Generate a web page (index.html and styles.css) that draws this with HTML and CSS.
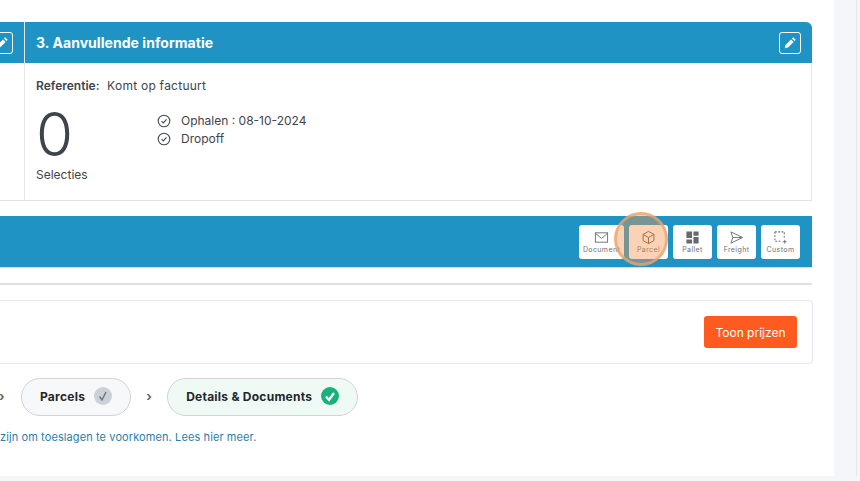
FILE: index.html
```html
<!DOCTYPE html>
<html lang="nl">
<head>
  <meta charset="UTF-8" />
  <title>Verzending</title>
  <link rel="stylesheet" href="styles.css">
</head>
<body>
  <div class="page">
    <main class="main">
      <section class="summary">
        <div class="col-prev">
          <div class="col-prev-head">
            <span class="edit-btn">
              <svg viewBox="0 0 16 16" width="13" height="13"><path d="M11.3 1.6l3.1 3.1-1.5 1.5-3.1-3.1zM8.7 4.2l3.1 3.1-6.9 6.9-3.9.8.8-3.9z" fill="#fff"/></svg>
            </span>
          </div>
        </div>
        <div class="col-info">
          <div class="col-head">
            <h2>3. Aanvullende informatie</h2>
            <span class="edit-btn">
              <svg viewBox="0 0 16 16" width="13" height="13"><path d="M11.3 1.6l3.1 3.1-1.5 1.5-3.1-3.1zM8.7 4.2l3.1 3.1-6.9 6.9-3.9.8.8-3.9z" fill="#fff"/></svg>
            </span>
          </div>
          <div class="col-body">
            <div class="ref"><b>Referentie:</b> Komt op factuurt</div>
            <div class="stats">
              <div class="count">
                <div class="count-num">0</div>
                <div class="count-label">Selecties</div>
              </div>
              <ul class="checks">
                <li>
                  <svg viewBox="0 0 16 16" width="14" height="14"><circle cx="8" cy="8" r="6.6" fill="none" stroke="#444b55" stroke-width="1.3"/><path d="M5.2 8.2l2 2 3.7-4" fill="none" stroke="#444b55" stroke-width="1.3"/></svg>
                  Ophalen : 08-10-2024
                </li>
                <li>
                  <svg viewBox="0 0 16 16" width="14" height="14"><circle cx="8" cy="8" r="6.6" fill="none" stroke="#444b55" stroke-width="1.3"/><path d="M5.2 8.2l2 2 3.7-4" fill="none" stroke="#444b55" stroke-width="1.3"/></svg>
                  Dropoff
                </li>
              </ul>
            </div>
          </div>
        </div>
      </section>

      <section class="type-bar">
        <div class="type-btn type-doc">
          <svg viewBox="0 0 16 16" width="15" height="15"><rect x="1.5" y="3" width="13" height="10" fill="none" stroke="#6b6f76" stroke-width="1"/><path d="M1.5 3.5L8 9l6.500-5.500" fill="none" stroke="#6b6f76" stroke-width="1"/></svg>
          <span>Document</span>
        </div>
        <div class="type-btn">
          <svg viewBox="0 0 16 16" width="15" height="15"><path d="M8 1.500l5.800 3.200v6.600L8 14.500l-5.800-3.200V4.700zM2.200 4.700L8 8l5.800-3.300M8 8v6.500" fill="none" stroke="#6b4a33" stroke-width="1"/></svg>
          <span>Parcel</span>
          <i class="click-ring"></i>
        </div>
        <div class="type-btn">
          <svg viewBox="0 0 16 16" width="15" height="15"><path d="M1.500 1.500h6v7h-6zM9 1.500h5.500v4.500H9zM1.500 10h6v4.500h-6zM9 7.500h5.500v7H9z" fill="#666a70"/></svg>
          <span>Pallet</span>
        </div>
        <div class="type-btn">
          <svg viewBox="0 0 16 16" width="15" height="15"><path d="M2 2l12.500 6L2 14l2-6zM4 8h10" fill="none" stroke="#6b6f76" stroke-width="1"/></svg>
          <span>Freight</span>
        </div>
        <div class="type-btn">
          <svg viewBox="0 0 16 16" width="15" height="15"><path d="M2 2h10v7M2 2v10h7" fill="none" stroke="#6b6f76" stroke-width="1.100" stroke-dasharray="2 1.500"/><path d="M12.500 10.500v4M10.500 12.500h4" fill="none" stroke="#6b6f76" stroke-width="1"/></svg>
          <span>Custom</span>
        </div>
      </section>

      <hr class="rule">

      <section class="price-card">
        <button class="price-btn" type="button">Toon prijzen</button>
      </section>

      <div class="steps">
        <span class="chev chev-first">›</span>
        <div class="step">
          Parcels
          <svg viewBox="0 0 18 18" width="18" height="18"><circle cx="9" cy="9" r="9" fill="#ccd0d9"/><path d="M5.500 9.500l2.500 3.500 4-8" fill="none" stroke="#6f7480" stroke-width="1.400"/></svg>
        </div>
        <span class="chev">›</span>
        <div class="step step-done">
          Details &amp; Documents
          <svg viewBox="0 0 18 18" width="18" height="18"><circle cx="9" cy="9" r="9" fill="#17b27a"/><path d="M5 9.500l3 3.500 5-7" fill="none" stroke="#fff" stroke-width="2.200"/></svg>
        </div>
      </div>

      <p class="note">zijn om toeslagen te voorkomen. Lees hier meer.</p>
    </main>
    <aside class="gutter"></aside>
  </div>
</body>
</html>
```

FILE: styles.css
```css
* {
  box-sizing: border-box;
}
html, body {
  margin: 0;
  padding: 0;
  overflow: hidden;
}
body {
  width: 860px;
  height: 481px;
  background: #f5f6f9;
  font-family: "Inter", "Open Sans", sans-serif;
  color: #3f444c;
}
.page {
  display: flex;
  height: 476px;
}
.main {
  width: 834px;
  padding: 22px 22px 0 0;
  background: #fff;
}
.gutter {
  flex: 1;
  background: #f5f6f9;
  border-right: 1px solid #e6e8ec;
  margin-right: 3px;
}

/* samenvatting */
.summary {
  display: flex;
  height: 179px;
  border-bottom: 1px solid #dfe3e8;
  border-right: 1px solid #e4e7eb;
  border-radius: 0 6px 0 0;
}
.col-prev {
  width: 25px;
  border-right: 1px solid #e4e7eb;
}
.col-prev-head {
  height: 41px;
  background: #1f94c4;
  display: flex;
  align-items: center;
  justify-content: flex-end;
  padding-right: 11px;
  overflow: hidden;
}
.col-info {
  flex: 1;
}
.col-head {
  height: 41px;
  background: #1f94c4;
  color: #fff;
  display: flex;
  align-items: center;
  justify-content: space-between;
  padding: 0 11px;
  border-radius: 0 6px 0 0;
  margin-right: -1px;
}
.col-head h2 {
  margin: 0 0 1px;
  font-size: 14px;
  font-weight: 700;
  letter-spacing: 0.05px;
}
.edit-btn {
  width: 22px;
  height: 22px;
  flex-shrink: 0;
  border: 1px solid #fff;
  border-radius: 3px;
  display: flex;
  align-items: center;
  justify-content: center;
}
.col-body {
  padding: 15px 11px 0;
}
.ref {
  font-size: 12px;
  line-height: 16px;
  letter-spacing: 0.25px;
}
.ref b {
  font-weight: 600;
  letter-spacing: 0;
  margin-right: 4px;
}
.stats {
  display: flex;
  margin-top: 8px;
}
.count {
  width: 121px;
}
.count-num {
  font-size: 60px;
  line-height: 56px;
  font-weight: 300;
  margin: 4px 0 5px;
}
.count-label {
  font-size: 12px;
  line-height: 16px;
}
.checks {
  list-style: none;
  margin: 10px 0 0;
  padding: 0;
  font-size: 12px;
  line-height: 18px;
}
.checks li {
  display: flex;
  align-items: center;
  gap: 10px;
}

/* type balk */
.type-bar {
  margin-top: 15px;
  height: 52px;
  background: #1f94c4;
  border-bottom: 1px solid #d9dde2;
  display: flex;
  justify-content: flex-end;
  align-items: center;
  gap: 5px;
  padding: 1px 12px 0 0;
}
.type-btn {
  position: relative;
  width: 39px;
  height: 34px;
  background: #fff;
  border-radius: 3px;
  display: flex;
  flex-direction: column;
  align-items: center;
  justify-content: center;
  gap: 1px;
  font-size: 7px;
  letter-spacing: 0.4px;
  line-height: 8px;
  color: #6b6f76;
}
.type-doc {
  width: 45px;
}
.click-ring {
  position: absolute;
  left: -15px;
  top: -13px;
  width: 54px;
  height: 54px;
  border-radius: 50%;
  border: 3px solid rgba(236, 165, 110, 0.75);
  background: rgba(243, 150, 80, 0.42);
}
.rule {
  margin: 15px 0 0;
  border: 0;
  height: 2px;
  background: #dcdfe3;
}

/* prijs kaart */
.price-card {
  margin: 15px -1px 0 0;
  height: 64px;
  background: #fff;
  border: 1px solid #e4e7eb;
  border-left: 0;
  border-radius: 0 4px 4px 0;
  display: flex;
  align-items: center;
  justify-content: flex-end;
  padding-right: 15px;
}
.price-btn {
  width: 93px;
  height: 32px;
  border: 0;
  border-radius: 3px;
  background: #ff5a1f;
  color: #fff;
  font-family: inherit;
  font-size: 12px;
}

/* stappen */
.steps {
  margin-top: 14px;
  display: flex;
  align-items: center;
  height: 38px;
  color: #23262b;
}
.chev {
  width: 6px;
  font-size: 13px;
  font-weight: 700;
  color: #666;
  margin-right: 15px;
  padding-bottom: 3px;
}
.chev-first {
  margin-left: -1px;
  margin-right: 16px;
}
.step {
  height: 38px;
  display: flex;
  align-items: center;
  gap: 9px;
  padding: 0 18px 2px;
  border: 1px solid #cfd4da;
  border-radius: 19px;
  background: #f7f8fa;
  font-size: 12px;
  font-weight: 700;
  letter-spacing: 0.25px;
  margin-right: 15px;
}
.step-done {
  background: #effaf4;
}
.note {
  margin: 14px 0 0;
  font-size: 11px;
  letter-spacing: 0.1px;
  line-height: 14px;
  color: #2a80a8;
}
```
